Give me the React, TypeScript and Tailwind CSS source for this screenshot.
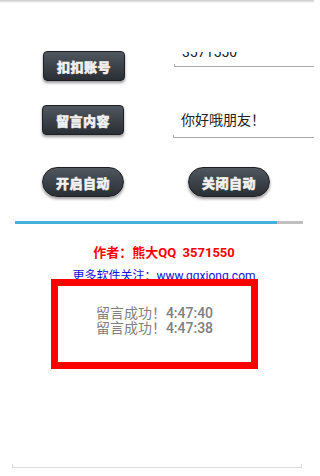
import React from 'react';

const sans = 'font-["Roboto","Noto_Sans_CJK_SC",sans-serif]';

// dark glossy button used by the QQ helper screen
const DarkButton = ({ label, pill = false, className = '' }: { label: string; pill?: boolean; className?: string }) => (
  <div
    className={`flex h-[30px] w-[82px] items-center justify-center border border-[#1c2024] bg-gradient-to-b from-[#50575f] to-[#2a2f35] shadow-[0_2px_3px_rgba(0,0,0,0.4)] ${
      pill ? 'rounded-full' : 'rounded-[4px]'
    } ${className}`}
  >
    <span className='font-["Noto_Sans_CJK_SC",sans-serif] text-[13px] leading-none font-black tracking-[0.5px] text-[#f1f1f1] [-webkit-text-stroke:0.5px_#f1f1f1]'>
      {label}
    </span>
  </div>
);

export default function App() {
  const logs = [
    { msg: '留言成功！', time: '4:47:40' },
    { msg: '留言成功！', time: '4:47:38' },
  ];
  const progress = 90;

  return (
    <div className={`relative h-[476px] w-[314px] overflow-hidden bg-white ${sans}`}>
      <div className="h-[3px] bg-gradient-to-b from-[#c8c8c8] to-white" />

      {/* QQ number row */}
      <div className="mt-[48px] flex h-[30px]">
        <DarkButton label="扣扣账号" className="ml-[43px] w-[81px]" />
        <div className="ml-[49px] mt-[1px] flex-1">
          <div className="h-[15px] overflow-hidden border-b border-[#a8a8a8] pl-[8px]">
            <div className="-mt-[10px] text-[14px] leading-[20px] text-[#222]">3571550</div>
          </div>
          <div className="-mt-[3px] h-[3px] w-px bg-[#a8a8a8]" />
        </div>
      </div>

      {/* message row */}
      <div className="mt-[24px] flex h-[33px]">
        <DarkButton label="留言内容" className="ml-[42px]" />
        <div className="ml-[49px] flex-1">
          <div className="h-[33px] border-b border-[#a8a8a8] pl-[8px] pt-[5px] text-[14px] leading-[20px] text-[#222]">
            你好哦朋友！
          </div>
          <div className="-mt-[3px] h-[3px] w-px bg-[#a8a8a8]" />
        </div>
      </div>

      {/* auto buttons */}
      <div className="mt-[29px] flex h-[29px] gap-[64px] pl-[42px]">
        <DarkButton label="开启自动" pill className="h-[29px]" />
        <DarkButton label="关闭自动" pill className="h-[29px]" />
      </div>

      <div className="mx-[15px] mt-[25px] h-[3px] w-[288px] bg-[#c0c0c0]">
        <div className="h-full bg-[#45b1da]" style={{ width: `${(progress / 100) * 288 + 3}px` }} />
      </div>

      <div className="mt-[20px] pl-[14px] text-center text-[13px] leading-[18px] font-bold text-[#f00]">
        作者：熊大QQ&nbsp;&nbsp;3571550
      </div>
      <div className="mt-[6px] pl-[14px] text-center text-[12px] leading-[16px] text-[#1010e0]">
        更多软件关注：www.qqxiong.com
      </div>

      <div className="relative -mt-[5px] ml-[51px] h-[90px] w-[207px] border-[7px] border-[#ff0000] bg-white pt-[20px] text-center text-[14px] leading-[15px] text-[#808080]">
        {logs.map((l) => (
          <div key={l.time}>
            {l.msg}
            <span className="font-medium">{l.time}</span>
          </div>
        ))}
      </div>

      <div className="mx-[12px] mt-[95px] flex items-end">
        <div className="h-[4px] w-px bg-[#d8d8d8]" />
        <div className="h-px flex-1 bg-[#dcdcdc]" />
        <div className="h-[4px] w-px bg-[#d8d8d8]" />
      </div>
    </div>
  );
}
